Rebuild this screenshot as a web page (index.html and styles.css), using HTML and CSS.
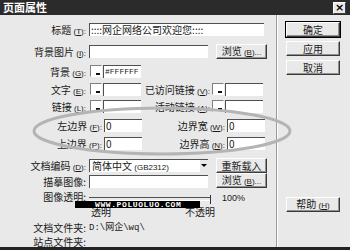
FILE: index.html
```html
<!DOCTYPE html>
<html lang="zh">
<head>
    <meta charset="UTF-8">
    <title>页面属性</title>
    <link rel="stylesheet" href="styles.css">
</head>
<body>
    <div class="win">
        <div class="titlebar">
            <span class="title">页面属性</span>
            <span class="close">×</span>
        </div>
        <div class="main">
            <div class="form">
                <div class="row h22">
                    <span class="lbl">标题<span class="mn"> (<u>T</u>):</span></span>
                    <span class="field w-title">::::网企网络公司欢迎您::::</span>
                </div>
                <div class="row h20">
                    <span class="lbl">背景图片<span class="mn"> (<u>I</u>):</span></span>
                    <span class="field w-path"></span>
                    <button class="btn browse">浏览<span class="mn"> (<u>B</u>)...</span></button>
                </div>
                <div class="row h18">
                    <span class="lbl">背景<span class="mn"> (<u>G</u>):</span></span>
                    <span class="swatch"></span>
                    <span class="field w-color mono">#FFFFFF</span>
                </div>
                <div class="row h17">
                    <span class="lbl">文字<span class="mn"> (<u>E</u>):</span></span>
                    <span class="swatch"></span>
                    <span class="field w-color"></span>
                    <span class="lbl2">已访问链接<span class="mn"> (<u>V</u>):</span></span>
                    <span class="swatch"></span>
                    <span class="field w-color2"></span>
                </div>
                <div class="row h19">
                    <span class="lbl">链接<span class="mn"> (<u>L</u>):</span></span>
                    <span class="swatch"></span>
                    <span class="field w-color"></span>
                    <span class="lbl2">活动链接<span class="mn"> (<u>A</u>):</span></span>
                    <span class="swatch"></span>
                    <span class="field w-color2"></span>
                </div>
                <div class="row h18">
                    <span class="lbl wide">左边界<span class="mn"> (<u>F</u>):</span></span>
                    <span class="field w-color">0</span>
                    <span class="lbl3">边界宽<span class="mn"> (<u>W</u>):</span></span>
                    <span class="field w-color2">0</span>
                </div>
                <div class="row h22">
                    <span class="lbl wide">上边界<span class="mn"> (<u>P</u>):</span></span>
                    <span class="field w-color">0</span>
                    <span class="lbl3">边界高<span class="mn"> (<u>N</u>):</span></span>
                    <span class="field w-color2">0</span>
                </div>
                <div class="row h16">
                    <span class="lbl">文档编码<span class="mn"> (<u>D</u>):</span></span>
                    <span class="field w-path select">简体中文 <span class="mn">(GB2312)</span><span class="arrow"></span></span>
                    <button class="btn browse">重新载入</button>
                </div>
                <div class="row h18">
                    <span class="lbl">描摹图像:</span>
                    <span class="field w-path"></span>
                    <button class="btn browse up">浏览<span class="mn"> (<u>B</u>)...</span></button>
                </div>
                <div class="row h14">
                    <span class="lbl slim">图像透明:</span>
                    <span class="track"><span class="thumb"></span></span>
                    <span class="pct">100%</span>
                </div>
                <div class="row h15">
                    <span class="tick-l">透明</span>
                    <span class="tick-r">不透明</span>
                </div>
                <div class="row h14">
                    <span class="lbl tight">文档文件夹:</span>
                    <span class="value">D:\网企\wq\</span>
                </div>
                <div class="row">
                    <span class="lbl tight">站点文件夹:</span>
                </div>
            </div>
            <div class="side">
                <button class="btn side-btn default">确定</button>
                <button class="btn side-btn">应用</button>
                <button class="btn side-btn">取消</button>
                <button class="btn side-btn help">帮助<span class="mn"> (<u>H</u>)</span></button>
            </div>
        </div>
        <div class="mark">WWW.POLUOLUO.COM</div>
        <svg class="ring" width="350" height="250" viewBox="0 0 350 250">
            <ellipse cx="162" cy="131" rx="128" ry="23" fill="none" stroke="#b4b4b4" stroke-width="3"/>
        </svg>
    </div>
</body>
</html>
```

FILE: styles.css
```css
body {
    margin: 0;
    font-family: "Noto Sans CJK SC", "Liberation Sans", sans-serif;
    font-size: 10px;
    color: #1a1a1a;
}
.win {
    width: 350px;
    height: 250px;
    background: #e9e9e9;
    position: relative;
    overflow: hidden;
    border-bottom: 3px solid #222;
    box-sizing: border-box;
}
.titlebar {
    height: 15px;
    background: #2b2b2b;
    color: #fff;
    display: flex;
    align-items: center;
    justify-content: space-between;
    padding: 0 4px 0 3px;
}
.title {
    font-weight: bold;
    font-size: 11px;
    line-height: 15px;
}
.close {
    width: 11px;
    height: 10px;
    background: #e9e9e9;
    color: #000;
    font: bold 11px/10px "DejaVu Sans", sans-serif;
    text-align: center;
    border: 1px solid;
    border-color: #fff #404040 #404040 #fff;
}
.main {
    display: flex;
    height: 232px;
}
.form {
    width: 277px;
    border-right: 1px solid #9a9a9a;
    box-shadow: 1px 0 0 #fff;
    padding-top: 8px;
    box-sizing: border-box;
    display: flex;
    flex-direction: column;
}
.row {
    display: flex;
    align-items: flex-start;
    flex-shrink: 0;
}
.h14 { height: 14px; }
.h15 { height: 15px; }
.h16 { height: 16px; }
.h17 { height: 17px; }
.h18 { height: 18px; }
.h19 { height: 19px; }
.h20 { height: 20px; }
.h22 { height: 22px; }
.mn {
    font-family: "Liberation Sans", sans-serif;
    font-size: 8px;
}
.lbl {
    width: 86px;
    margin-right: 3px;
    text-align: right;
    line-height: 13px;
    white-space: nowrap;
}
.lbl.wide {
    width: 102px;
    margin-right: 2px;
}
.lbl.slim {
    line-height: 8px;
}
.lbl.tight {
    line-height: 12px;
}
.lbl2 {
    width: 68px;
    margin: 0 1px 0 1px;
    text-align: right;
    line-height: 13px;
    white-space: nowrap;
}
.lbl3 {
    width: 83px;
    margin-right: 2px;
    text-align: right;
    line-height: 13px;
    white-space: nowrap;
}
.field {
    height: 13px;
    background: #fff;
    border-top: 1px solid #505050;
    border-left: 1px solid #505050;
    box-sizing: border-box;
    line-height: 12px;
    padding-left: 1px;
    white-space: nowrap;
    overflow: hidden;
}
.w-title { width: 175px; }
.w-path { width: 119px; }
.w-color { width: 38px; }
.w-color2 { width: 38px; }
.mono {
    font-family: "Liberation Mono", monospace;
    font-size: 8px;
}
.swatch {
    width: 12px;
    height: 12px;
    margin: 0 1px;
    background: #fff;
    border: 1px solid;
    border-color: #808080 #fff #fff #808080;
    box-sizing: border-box;
    position: relative;
}
.swatch::after {
    content: "";
    position: absolute;
    right: 1px;
    bottom: 1px;
    width: 4px;
    height: 2px;
    background: #111;
}
.select {
    position: relative;
    padding-left: 2px;
}
.arrow {
    position: absolute;
    right: 0;
    top: 0;
    width: 9px;
    height: 12px;
    background: #e9e9e9;
    border-left: 1px solid #fff;
    box-sizing: border-box;
}
.arrow::after {
    content: "";
    position: absolute;
    left: 1px;
    top: 4px;
    border: 3px solid transparent;
    border-top-color: #000;
    border-bottom: 0;
}
.btn {
    font-family: inherit;
    font-size: 10px;
    color: #1a1a1a;
    background: #e9e9e9;
    border: 1px solid;
    border-color: #fff #3a3a3a #3a3a3a #fff;
    box-shadow: inset -1px -1px 0 #909090;
    padding: 0;
    line-height: 12px;
    white-space: nowrap;
}
.browse {
    width: 51px;
    height: 15px;
    margin-left: 8px;
    margin-top: -1px;
}
.browse.up {
    margin-top: -2px;
}
.track {
    width: 121px;
    height: 2px;
    margin-top: 4px;
    border-top: 1px solid #505050;
    border-bottom: 1px solid #fff;
    position: relative;
}
.thumb {
    position: absolute;
    right: -1px;
    top: -3px;
    width: 1px;
    height: 9px;
    background: #333;
}
.pct {
    margin-left: 12px;
    line-height: 10px;
    font-family: "Liberation Sans", sans-serif;
    font-size: 9px;
}
.tick-l {
    margin-left: 91px;
    line-height: 10px;
}
.tick-r {
    margin-left: 74px;
    line-height: 10px;
}
.value {
    line-height: 12px;
    font-family: "Liberation Mono", "Noto Sans CJK SC", monospace;
    font-size: 9px;
}
.side {
    flex: 1;
    padding: 7px 0 35px 9px;
    display: flex;
    flex-direction: column;
    gap: 4px;
}
.side-btn {
    width: 54px;
    height: 15px;
}
.default {
    outline: 1px solid #000;
}
.help {
    margin-top: auto;
}
.mark {
    position: absolute;
    left: 75px;
    top: 201px;
    width: 125px;
    height: 7px;
    background: #000;
    color: #fff;
    font: bold 8px/7px "Liberation Mono", monospace;
    letter-spacing: 0.6px;
    padding-left: 20px;
    box-sizing: border-box;
    overflow: hidden;
}
.ring {
    position: absolute;
    left: 0;
    top: 0;
    pointer-events: none;
}
```
